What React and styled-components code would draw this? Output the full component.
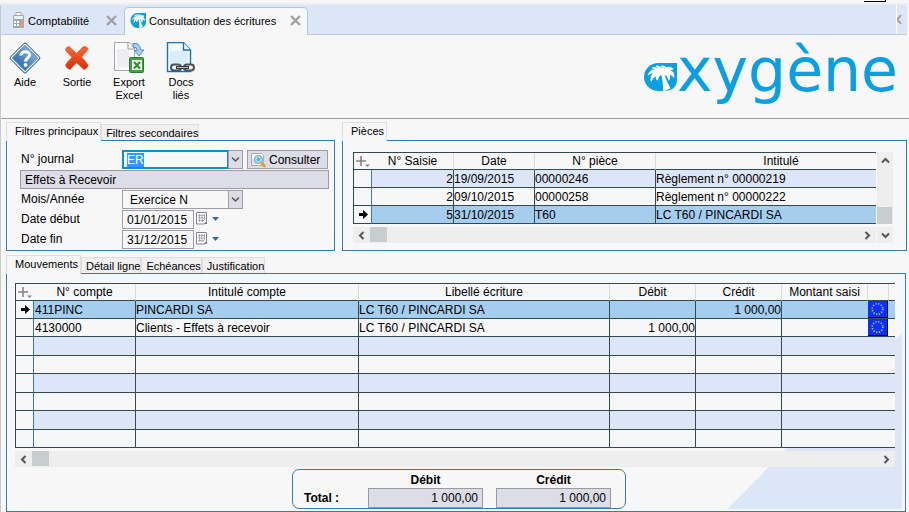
import React, { useEffect, useRef } from 'react';
import styled, { createGlobalStyle, css } from 'styled-components';

const GlobalStyle = createGlobalStyle`
	* {
		box-sizing: border-box;
	}
	body {
		margin: 0;
		background: #f7f7f7;
		color: #000;
		font: 12px/14px 'Liberation Sans', Arial, sans-serif;
	}
	button, input, select {
		margin: 0;
		padding: 0;
		border: 0;
		border-radius: 0;
		background: none;
		color: inherit;
		font: inherit;
	}
	svg {
		flex-shrink: 0;
	}
`;

const Page = styled.div`
	display: flex;
	flex-direction: column;
	min-height: 100vh;
`;

const TopEdge = styled.div`
	display: flex;
	justify-content: flex-end;
	height: 5px;
	padding-right: 23px;
	border-bottom: 2px solid #eeeeee;
`;

const TopMark = styled.div`
	width: 22px;
	height: 2px;
	border: solid #000;
	border-width: 0 1px 1px 0;
`;

const Frame = styled.div`
	flex: 1;
	display: flex;
	flex-direction: column;
	border-left: 1px solid #c2cccc;
`;

/* window tabs */

const WindowTabs = styled.nav`
	display: flex;
	align-items: flex-end;
	height: 30px;
	padding-left: 1px;
	margin-right: 2px;
	background: #dde6f7;
	border-bottom: 1px solid #b4d0e0;
`;

const WindowTab = styled.div`
	display: flex;
	align-items: center;
	height: 28px;
	width: ${(props) => (props.$active ? '184px' : '122px')};
	margin-bottom: -1px;
	padding: 0 5px 2px ${(props) => (props.$active ? '5px' : '9px')};
	border: 1px solid transparent;
	border-bottom: 0;
	border-radius: 5px 5px 0 0;
	${(props) =>
		props.$active &&
		css`
			background: #f7f7f7;
			border-color: #a9cbdc;
		`}
`;

const WindowTabButton = styled.button`
	flex: 1;
	display: flex;
	align-items: center;
	gap: 3px;
	font-size: 11px;
	white-space: nowrap;
`;

const CloseButton = styled.button`
	display: flex;
`;

const TabOverflow = styled.div`
	width: 11px;
	height: 29px;
	margin-left: auto;
	padding-top: 9px;
	border-left: 1px solid #fff;
`;

/* toolbar */

const Toolbar = styled.header`
	display: flex;
	justify-content: space-between;
	height: 84px;
	padding: 7px 11px 0 0;
	border-bottom: 1px solid #9a9ca4;
`;

const Tools = styled.div`
	display: flex;
	align-items: flex-start;
	gap: 4px;
`;

const ToolButton = styled.button`
	display: flex;
	flex-direction: column;
	align-items: center;
	gap: 2px;
	width: 48px;
	font-size: 11px;
	line-height: 13px;
`;

const Brand = styled.div`
	display: flex;
	align-items: baseline;
	color: #0a9fe3;
	font: 60px/56px 'DejaVu Sans', sans-serif;
`;

/* tabbed panels */

const Columns = styled.div`
	display: flex;
	gap: 7px;
	padding: 3px 2px 0 5px;
`;

const Group = styled.section`
	display: flex;
	flex-direction: column;
	flex: ${(props) => (props.$width ? `0 0 ${props.$width}` : '1')};
	min-width: 0;
`;

const Bottom = styled.main`
	flex: 1;
	display: flex;
	padding: 4px 3px 0 5px;
`;

const TabList = styled.div`
	display: flex;
	align-items: flex-end;
	height: 18px;
`;

const Tab = styled.button`
	position: relative;
	height: 16px;
	padding: 0 0 0 4px;
	background: #f0f0f0;
	border: 1px solid #dedede;
	border-bottom: 0;
	font-size: 11px;
	white-space: nowrap;
	${(props) =>
		props.$active &&
		css`
			height: 19px;
			margin-bottom: -1px;
			padding: 0 2px 2px 8px;
			background: #f7f7f7;
		`}
`;

const Panel = styled.div`
	flex: 1;
	border: 1px solid #357ab2;
	padding: ${(props) => props.$padding};
	${(props) =>
		props.$corner &&
		css`
			background: linear-gradient(135deg, transparent 50%, #dde6f7 50%)
				no-repeat right 3px bottom 2px / 175px 175px;
		`}
`;

/* filters */

const FilterRow = styled.div`
	display: flex;
	align-items: flex-start;
	height: 20px;
`;

const FieldLabel = styled.label`
	width: 102px;
	padding-left: 1px;
	line-height: 19px;
`;

const Combo = styled.div`
	position: relative;
	display: flex;
	width: 121px;
	height: 19px;
	margin-right: 4px;
	border: 1px solid #9f9ca6;
`;

const JournalInput = styled.input`
	width: 107px;
	height: 19px;
	margin: -1px 0 0 -1px;
	padding-left: 3px;
	background: #f7f7f7;
	border: 2px solid #0b8fd0;
	outline: none;
	caret-color: transparent;
	&::selection {
		background: #3399ff;
		color: #fff;
	}
`;

const MonthSelect = styled.select`
	appearance: none;
	width: 100%;
	padding-left: 7px;
	outline: none;
`;

const ComboArrow = styled.span`
	position: absolute;
	top: 0;
	right: 0;
	display: flex;
	align-items: center;
	justify-content: center;
	width: 14px;
	height: 17px;
	background: #dddde7;
	border-left: 1px solid #9f9ca6;
	pointer-events: none;
`;

const ConsultButton = styled.button`
	display: flex;
	align-items: center;
	gap: 3px;
	width: 81px;
	height: 19px;
	padding-left: 2px;
	background: #dddde7;
	border: 1px solid #9f9ca6;
`;

const ReadOnlyField = styled.input`
	width: ${(props) => props.$width};
	height: 19px;
	padding: 0 4px;
	background: #dddde7;
	border: 1px solid #9a99a4;
	font-weight: normal;
	text-align: ${(props) => props.$align};
`;

const DateInput = styled.input`
	width: 72px;
	height: 19px;
	padding-left: 4px;
	border: 1px solid #9f9ca6;
`;

const CalendarButton = styled.button`
	display: flex;
	align-items: center;
	gap: 4px;
	height: 17px;
	margin-left: 2px;
`;

/* grids */

const Grid = styled.table`
	width: 100%;
	table-layout: fixed;
	border-collapse: separate;
	border-spacing: 0;
	border-top: 1px solid #314a54;
	border-left: 1px solid #314a54;
`;

const HeadCell = styled.th`
	height: 17px;
	padding: ${(props) => props.$padding || '0'};
	background: #f7f7f7;
	border-bottom: 1px solid #314a54;
	border-right: ${(props) => (props.$last || props.$corner ? '0' : '1px solid #dadae4')};
	font-weight: normal;
	line-height: 14px;
`;

const rowColors = {
	selected: '#a5cdee',
	tinted: '#dde6f7',
	plain: '#f7f7f7',
};

const Row = styled.tr`
	height: ${(props) => (props.$tall ? '19px' : '18px')};
	background: ${(props) => rowColors[props.$tone]};
`;

const Cell = styled.td`
	padding: ${(props) => props.$padding || '0'};
	border-bottom: 1px solid #314a54;
	border-right: ${(props) => (props.$open ? '0' : '1px solid #314a54')};
	line-height: 14px;
	text-align: ${(props) => (props.$number ? 'right' : 'left')};
	white-space: nowrap;
`;

const MarkerCell = styled(Cell)`
	padding-left: 4px;
	background: #f7f7f7;
	border-right-color: #357ab2;
	svg {
		display: block;
	}
`;

const EuroButton = styled.button`
	display: block;
	width: 20px;
	height: 17px;
	background: #0a32ff;
	border: solid #000;
	border-width: 0 1px 1px 0;
`;

const GridArea = styled.div`
	display: grid;
	grid-template-columns: minmax(0, 1fr) 16px;
	gap: 3px 1px;
`;

const ScrollBar = styled.div`
	display: flex;
	flex-direction: ${(props) => (props.$vertical ? 'column' : 'row')};
	height: ${(props) => (props.$vertical ? 'auto' : '16px')};
	margin-top: ${(props) => props.$top || '0'};
	background: #eeeeee;
`;

const ScrollButton = styled.button`
	display: flex;
	align-items: center;
	justify-content: center;
	width: 17px;
	height: 16px;
`;

const ScrollThumb = styled.div`
	width: ${(props) => (props.$vertical ? '15px' : '17px')};
	height: ${(props) => (props.$vertical ? '17px' : '15px')};
	background: #c7cecd;
	margin-top: ${(props) => (props.$vertical ? 'auto' : '0')};
`;

const Spacer = styled.div`
	flex: 1;
`;

/* totals */

const Totals = styled.div`
	display: grid;
	grid-template-columns: 51px 115px 115px;
	column-gap: 13px;
	align-items: center;
	width: 334px;
	height: 40px;
	margin: 2px 0 0 277px;
	padding: 3px 11px 0;
	background: #f7f7f7;
	border: 1px solid #357ab2;
	border-radius: 7px;
	font-weight: bold;
`;

const TotalLabel = styled.label`
	text-align: center;
`;

const TotalField = styled(ReadOnlyField)`
	width: 115px;
	height: 20px;
`;

/* drawings */

const PalmLogo = ({ width, height }) => (
	<svg width={width} height={height} viewBox="0 0 33 28" preserveAspectRatio="none" aria-hidden="true">
		<path d="M33 0H15A14 14 0 0 0 15 28H20Q33 28 33 16Z" fill="#0a9fe3" />
		<path
			d="M17 8Q12 3 9 5Q12 5 13 7Q8 6 5 12Q8 9 11 10Q7 13 8 18Q10 13 13 12Q12 15 14 17Q15 12 18 11Q20 17 20 28L26 25Q22 18 20 11Q24 12 25 17Q27 13 25 11Q28 11 30 14Q30 8 26 8Q27 6 29 6Q26 3 22 5Q22 3 18 3Q20 4 19 6Q16 3 13 3Q16 5 17 8Z"
			fill="#fff"
			stroke="#fff"
			strokeWidth="1"
			strokeLinejoin="round"
		/>
	</svg>
);

const CalculatorIcon = () => (
	<svg width="13" height="17" viewBox="0 0 13 17" aria-hidden="true">
		<path d="M4 0.5h5v4H4z" fill="#fff" stroke="#aaa" />
		<rect x="1" y="3" width="11" height="13" rx="1" fill="#a7a7ab" />
		<rect x="2" y="4" width="9" height="3" fill="#e8f3f7" />
		<path d="M2 9h2v2H2zM5 9h2v2H5zM2 12h2v2H2zM5 12h2v2H5z" fill="#fff" />
		<path d="M8 9h3v2H8zM8 12h3v2H8z" fill="#ef9c67" />
	</svg>
);

const CloseIcon = () => (
	<svg width="12" height="11" viewBox="0 0 12 11" aria-hidden="true">
		<path d="M1 1l9 9M10 1l-9 9" stroke="#a19fa3" strokeWidth="2.4" />
	</svg>
);

const HelpIcon = () => (
	<svg width="32" height="32" viewBox="0 0 32 32" aria-hidden="true">
		<defs>
			<linearGradient id="help" x1="0" y1="0" x2="0" y2="1">
				<stop offset="0" stopColor="#7fabd6" />
				<stop offset="1" stopColor="#2f70ad" />
			</linearGradient>
		</defs>
		<rect x="5" y="5" width="22" height="22" rx="2" transform="rotate(45 16 16)" fill="#fff" stroke="#3c71a4" />
		<rect x="7" y="7" width="18" height="18" rx="1" transform="rotate(45 16 16)" fill="url(#help)" stroke="#6191bd" />
		<path d="M12 13.5C12 8.5 20.5 8.5 20.5 13C20.5 16 16.5 16 16.5 19.5" fill="none" stroke="#fff" strokeWidth="3" />
		<circle cx="16.5" cy="23" r="1.9" fill="#fff" />
	</svg>
);

const ExitIcon = () => (
	<svg width="32" height="32" viewBox="0 0 32 32" aria-hidden="true">
		<defs>
			<linearGradient id="exit" x1="0" y1="0" x2="0" y2="1">
				<stop offset="0" stopColor="#ff6a35" />
				<stop offset="1" stopColor="#d92d08" />
			</linearGradient>
		</defs>
		<path
			d="M8 4.5L15.5 11.5L22 5Q24 3.5 27 6.5Q27 8 20.5 15Q25 20 27 23Q27 26 23 27.5L15.5 20.5L9 27.5Q5.5 26.5 4.5 23Q7 19 11 15.5L4.5 8Q5 5 8 4.5Z"
			fill="url(#exit)"
			stroke="#d8420f"
			strokeWidth="0.7"
		/>
	</svg>
);

const ExportIcon = () => (
	<svg width="32" height="32" viewBox="0 0 32 32" aria-hidden="true">
		<path d="M1.5 0.5H16.5L21.5 6V28.5H1.5Z" fill="#fbfbfc" stroke="#a8a3aa" />
		<path d="M4 7h12v18H4z" fill="#eeeef2" />
		<path d="M15 0.5V7H21" fill="#fff" stroke="#9a959e" />
		<path d="M20 1.5Q27 0 27.5 8H31L26 14L21.5 8.5H24.5Q24 5 20 5Z" fill="#a9d0ee" stroke="#4e8fc4" />
		<rect x="16.5" y="15.5" width="14" height="15" rx="1" fill="#3fa044" stroke="#267f2c" />
		<path d="M19 18h10v10H19z" fill="#e9f5e5" />
		<path d="M21 20l6 6.5M27 20l-6 6.5" stroke="#2f8b35" strokeWidth="2" />
	</svg>
);

const LinkedDocIcon = () => (
	<svg width="32" height="32" viewBox="0 0 32 32" aria-hidden="true">
		<path d="M2.5 0.5H18.5L25.5 8V29.5H2.5Z" fill="#f3fafe" stroke="#1a73a8" strokeWidth="1.4" />
		<path d="M5 9h18v15H5z" fill="#d6effb" />
		<path d="M18.5 0.5V8H25.5" fill="#fff" stroke="#1a73a8" strokeWidth="1.4" />
		<g fill="#e6f2f8" stroke="#4d5158" strokeWidth="2">
			<rect x="6" y="22.5" width="10" height="6" rx="3" />
			<rect x="19" y="22.5" width="10" height="6" rx="3" />
		</g>
		<path d="M11 25.5H24" stroke="#33373c" strokeWidth="3" />
		<path d="M12 25.5H23" stroke="#b9bdc2" />
	</svg>
);

const SearchDocIcon = () => (
	<svg width="16" height="16" viewBox="0 0 16 16" aria-hidden="true">
		<path d="M1.5 1.5h10l2 2v10h-12z" fill="#fdfdfd" stroke="#aaaab0" />
		<path d="M3 12V7M5 12V5" stroke="#b4c7d8" />
		<circle cx="8.5" cy="7.5" r="4" fill="#a8ddf8" stroke="#7d9db4" />
		<circle cx="8.5" cy="7.5" r="1.7" fill="#4cb1e6" />
		<path d="M11.5 11l3 3" stroke="#dc9c3c" strokeWidth="2.5" strokeLinecap="round" />
	</svg>
);

const CalendarIcon = () => (
	<svg width="12" height="13" viewBox="0 0 12 13" aria-hidden="true">
		<path d="M0.5 0.5h10v9l-2 2.5h-8z" fill="#fff" stroke="#85838c" />
		<path d="M2 3.5h7M2 6h7M2 8.5h6M3.5 2v8M6 2v8M8.5 2v6" stroke="#a9a8b2" />
		<path d="M8 12l3-3v3z" fill="#77757f" />
	</svg>
);

const Caret = () => (
	<svg width="7" height="4" viewBox="0 0 7 4" aria-hidden="true">
		<path d="M0 0h7L3.5 4z" fill="#376b9d" />
	</svg>
);

const Chevron = ({ turn = 0, color = '#55555a', stroke = 2 }) => (
	<svg width="9" height="9" viewBox="0 0 9 9" aria-hidden="true">
		<path d="M1 2.5L4.5 6L8 2.5" transform={`rotate(${turn} 4.5 4.5)`} fill="none" stroke={color} strokeWidth={stroke} />
	</svg>
);

const CornerSvg = styled.svg`
	display: block;
	margin-left: 2px;
`;

const PlusIcon = () => (
	<CornerSvg width="15" height="13" viewBox="0 0 15 13" aria-hidden="true">
		<path d="M0 6h10M5 1v10" stroke="#8b8387" strokeWidth="1.6" />
		<path d="M9 9.5h5l-2.5 2.5z" fill="#8b8387" />
	</CornerSvg>
);

const RowArrow = () => (
	<svg width="11" height="9" viewBox="0 0 11 9" aria-hidden="true">
		<path d="M1 3h4V0L10 4.5L5 9V6H1z" fill="#000" />
	</svg>
);

const BlockSvg = styled.svg`
	display: block;
`;

const EuroFlag = () => (
	<BlockSvg width="18" height="16" viewBox="0 0 18 16" aria-hidden="true">
		<circle cx="9.5" cy="8" r="5.3" fill="none" stroke="#d6d060" strokeWidth="1.6" strokeDasharray="1.2 1.575" />
	</BlockSvg>
);

const HorizontalScroll = ({ top }) => (
	<ScrollBar $top={top}>
		<ScrollButton aria-label="Défiler à gauche">
			<Chevron turn={90} />
		</ScrollButton>
		<ScrollThumb />
		<Spacer />
		<ScrollButton aria-label="Défiler à droite">
			<Chevron turn={-90} />
		</ScrollButton>
	</ScrollBar>
);

/* data */

const tools = [
	{ label: ['Aide'], Icon: HelpIcon },
	{ label: ['Sortie'], Icon: ExitIcon },
	{ label: ['Export', 'Excel'], Icon: ExportIcon },
	{ label: ['Docs', 'liés'], Icon: LinkedDocIcon },
];

const pieces = [
	{ saisie: '2', date: '19/09/2015', piece: '00000246', intitule: 'Règlement n° 00000219', tone: 'tinted' },
	{ saisie: '2', date: '09/10/2015', piece: '00000258', intitule: 'Règlement n° 00000222', tone: 'plain' },
	{ saisie: '5', date: '31/10/2015', piece: 'T60', intitule: 'LC T60 / PINCARDI SA', tone: 'selected' },
];

const mouvements = [
	{ compte: '411PINC', intitule: 'PINCARDI SA', libelle: 'LC T60 / PINCARDI SA', debit: '', credit: '1 000,00', tone: 'selected' },
	{ compte: '4130000', intitule: 'Clients - Effets à recevoir', libelle: 'LC T60 / PINCARDI SA', debit: '1 000,00', credit: '', tone: 'plain' },
];

const emptyRows = [0, 1, 2, 3, 4, 5];

const Tabs = ({ names }) => (
	<TabList role="tablist">
		{names.map((name, i) => (
			<Tab key={name} role="tab" aria-selected={i === 0} $active={i === 0}>
				{name}
			</Tab>
		))}
	</TabList>
);

const Filters = () => {
	const journal = useRef(null);

	useEffect(() => {
		journal.current.focus();
		journal.current.select();
	}, []);

	return (
		<Group $width="329px">
			<Tabs names={['Filtres principaux', 'Filtres secondaires']} />
			<Panel $padding="9px 5px 0 13px">
				<FilterRow>
					<FieldLabel htmlFor="journal">N° journal</FieldLabel>
					<Combo>
						<JournalInput id="journal" ref={journal} defaultValue="ER" />
						<ComboArrow>
							<Chevron stroke={1.5} />
						</ComboArrow>
					</Combo>
					<ConsultButton>
						<SearchDocIcon />
						Consulter
					</ConsultButton>
				</FilterRow>
				<FilterRow>
					<ReadOnlyField $width="100%" aria-label="Nom du journal" readOnly value="Effets à Recevoir" />
				</FilterRow>
				<FilterRow>
					<FieldLabel htmlFor="mois">Mois/Année</FieldLabel>
					<Combo>
						<MonthSelect id="mois">
							<option>Exercice N</option>
						</MonthSelect>
						<ComboArrow>
							<Chevron stroke={1.5} />
						</ComboArrow>
					</Combo>
				</FilterRow>
				<FilterRow>
					<FieldLabel htmlFor="date-debut">Date début</FieldLabel>
					<DateInput id="date-debut" defaultValue="01/01/2015" />
					<CalendarButton aria-label="Choisir la date de début">
						<CalendarIcon />
						<Caret />
					</CalendarButton>
				</FilterRow>
				<FilterRow>
					<FieldLabel htmlFor="date-fin">Date fin</FieldLabel>
					<DateInput id="date-fin" defaultValue="31/12/2015" />
					<CalendarButton aria-label="Choisir la date de fin">
						<CalendarIcon />
						<Caret />
					</CalendarButton>
				</FilterRow>
			</Panel>
		</Group>
	);
};

const Pieces = () => (
	<Group>
		<Tabs names={['Pièces']} />
		<Panel $padding="11px 13px 0 10px">
			<GridArea>
				<Grid>
					<colgroup>
						<col width="18" />
						<col width="82" />
						<col width="81" />
						<col width="121" />
						<col />
					</colgroup>
					<thead>
						<tr>
							<HeadCell $corner><PlusIcon /></HeadCell>
							<HeadCell>N° Saisie</HeadCell>
							<HeadCell>Date</HeadCell>
							<HeadCell>N° pièce</HeadCell>
							<HeadCell $last $padding="0 0 0 30px">Intitulé</HeadCell>
						</tr>
					</thead>
					<tbody>
						{pieces.map((row) => (
							<Row key={row.piece} $tone={row.tone}>
								<MarkerCell>{row.tone === 'selected' && <RowArrow />}</MarkerCell>
								<Cell $number>{row.saisie}</Cell>
								<Cell>{row.date}</Cell>
								<Cell>{row.piece}</Cell>
								<Cell $open>{row.intitule}</Cell>
							</Row>
						))}
					</tbody>
				</Grid>
				<ScrollBar $vertical>
					<ScrollButton aria-label="Défiler vers le haut">
						<Chevron turn={180} />
					</ScrollButton>
					<ScrollThumb $vertical />
				</ScrollBar>
				<HorizontalScroll />
				<ScrollBar>
					<ScrollButton aria-label="Défiler vers le bas">
						<Chevron />
					</ScrollButton>
				</ScrollBar>
			</GridArea>
		</Panel>
	</Group>
);

const Mouvements = () => (
	<Group>
		<Tabs names={['Mouvements', 'Détail ligne', 'Echéances', 'Justification']} />
		<Panel $corner $padding="9px 10px 2px 8px">
			<Grid>
				<colgroup>
					<col width="18" />
					<col width="102" />
					<col width="223" />
					<col />
					<col width="86" />
					<col width="86" />
					<col width="86" />
					<col width="21" />
					<col width="6" />
				</colgroup>
				<thead>
					<tr>
						<HeadCell $corner><PlusIcon /></HeadCell>
						<HeadCell>N° compte</HeadCell>
						<HeadCell>Intitulé compte</HeadCell>
						<HeadCell>Libellé écriture</HeadCell>
						<HeadCell>Débit</HeadCell>
						<HeadCell>Crédit</HeadCell>
						<HeadCell>Montant saisi</HeadCell>
						<HeadCell />
						<HeadCell $last />
					</tr>
				</thead>
				<tbody>
					{mouvements.map((row) => (
						<Row key={row.compte} $tone={row.tone}>
							<MarkerCell>{row.tone === 'selected' && <RowArrow />}</MarkerCell>
							<Cell $padding="0 0 0 1px">{row.compte}</Cell>
							<Cell>{row.intitule}</Cell>
							<Cell>{row.libelle}</Cell>
							<Cell $number>{row.debit}</Cell>
							<Cell $number>{row.credit}</Cell>
							<Cell $open />
							<Cell $open>
								<EuroButton aria-label="Devise">
									<EuroFlag />
								</EuroButton>
							</Cell>
							<Cell $open />
						</Row>
					))}
					{emptyRows.map((n) => (
						<Row key={n} $tone={n % 2 ? 'plain' : 'tinted'} $tall={n % 2 === 0}>
							<MarkerCell />
							<Cell />
							<Cell />
							<Cell />
							<Cell />
							<Cell />
							<Cell $open colSpan={3} />
						</Row>
					))}
				</tbody>
			</Grid>
			<HorizontalScroll top="3px" />
			<Totals>
				<span />
				<TotalLabel htmlFor="total-debit">Débit</TotalLabel>
				<TotalLabel htmlFor="total-credit">Crédit</TotalLabel>
				<span>Total :</span>
				<TotalField id="total-debit" $align="right" readOnly value="1 000,00" />
				<TotalField id="total-credit" $align="right" readOnly value="1 000,00" />
			</Totals>
		</Panel>
	</Group>
);

const App = () => {
	return (
		<>
			<GlobalStyle />
			<Page>
				<TopEdge>
					<TopMark />
				</TopEdge>
				<Frame>
					<WindowTabs>
						<WindowTab>
							<WindowTabButton>
								<CalculatorIcon />
								Comptabilité
							</WindowTabButton>
							<CloseButton aria-label="Fermer Comptabilité">
								<CloseIcon />
							</CloseButton>
						</WindowTab>
						<WindowTab $active>
							<WindowTabButton>
								<PalmLogo width={16} height={15} />
								Consultation des écritures
							</WindowTabButton>
							<CloseButton aria-label="Fermer Consultation des écritures">
								<CloseIcon />
							</CloseButton>
						</WindowTab>
						<TabOverflow>
							<BlockSvg width="5" height="11" viewBox="6 0 5 11" aria-hidden="true">
								<path d="M10 1L6.5 5.5L10 10" fill="none" stroke="#a19fa3" strokeWidth="2" />
							</BlockSvg>
						</TabOverflow>
					</WindowTabs>
					<Toolbar>
						<Tools>
							{tools.map(({ label, Icon }) => (
								<ToolButton key={label[0]}>
									<Icon />
									<span>
										{label.map((line) => (
											<div key={line}>{line}</div>
										))}
									</span>
								</ToolButton>
							))}
						</Tools>
						<Brand>
							<PalmLogo width={34} height={28} />
							xygène
						</Brand>
					</Toolbar>
					<Columns>
						<Filters />
						<Pieces />
					</Columns>
					<Bottom>
						<Mouvements />
					</Bottom>
				</Frame>
			</Page>
		</>
	);
};

export default App;
